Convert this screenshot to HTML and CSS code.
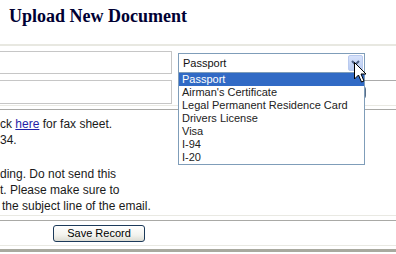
FILE: index.html
```html
<!DOCTYPE html>
<html>
<head>
<meta charset="utf-8">
<link rel="stylesheet" href="styles.css">
</head>
<body>
<h1 class="title">Upload New Document</h1>
<div class="rule-top"></div>
<div class="row row1">
  <div class="box"></div>
  <div class="cell">
    <div class="select">
      <span class="select-text">Passport</span>
      <span class="select-arrow"><svg width="15" height="16" viewBox="0 0 15 16"><path d="M4 6 L7.5 9.5 L11 6" fill="none" stroke="#4d6185" stroke-width="2"/></svg></span>
    </div>
  </div>
</div>
<div class="row row2">
  <div class="box box2"></div>
  <div class="cell cell2"><span class="browse"></span></div>
</div>
<div class="sep-light sep-a"></div>
<div class="sep-gray"></div>
<div class="text">
  <p class="para1"><span class="line l1">ck <a href="#">here</a> for fax sheet.</span><span class="line l2">34.</span></p>
  <p class="para2"><span class="line l3">ding. Do not send this</span><span class="line l4">t. Please make sure to</span><span class="line l5">the subject line of the email.</span></p>
</div>
<div class="sep-light"></div>
<div class="sep-gray sep-b"></div>
<div class="actions"><button class="save">Save Record</button></div>
<div class="sep-light"></div>
<div class="rule-bottom"></div>

<ul class="dropdown">
  <li class="selected">Passport</li>
  <li>Airman's Certificate</li>
  <li>Legal Permanent Residence Card</li>
  <li>Drivers License</li>
  <li>Visa</li>
  <li>I-94</li>
  <li>I-20</li>
</ul>
<svg class="cursor" width="14" height="23" viewBox="0 0 14 23"><path d="M1.5 1.5 L1.5 18 L5.5 14 L8.5 21 L11 20 L8 13 L13 13 Z" fill="#fff" stroke="#000" stroke-width="1" stroke-linejoin="miter"/></svg>
</body>
</html>
```
FILE: styles.css
```css
html, body {
  margin: 0;
  padding: 0;
}
body {
  width: 396px;
  height: 254px;
  overflow: hidden;
  background: #fff;
  position: relative;
  font-family: "Liberation Sans", Arial, sans-serif;
  font-size: 12px;
  color: #1a1a1a;
}
.title {
  margin: 0;
  height: 44px;
  box-sizing: border-box;
  padding: 5px 0 0 9px;
  font-family: "Liberation Serif", "Times New Roman", serif;
  font-weight: bold;
  font-size: 18px;
  line-height: 22px;
  color: #000033;
}
.rule-top {
  height: 2px;
  background: #e8e8e1;
}
.row {
  display: flex;
}
.row1 {
  margin-top: 5px;
  height: 23px;
}
.row2 {
  margin-top: 6px;
  height: 24px;
}
.box {
  margin-left: -10px;
  width: 182px;
  height: 23px;
  box-sizing: border-box;
  border: 1px solid #c6c6c6;
  background: #fff;
}
.box2 {
  height: 24px;
}
.cell {
  margin-left: 6px;
  flex: 1;
}
.select {
  margin-top: 2px;
  width: 187px;
  height: 20px;
  box-sizing: border-box;
  border: 1px solid #7f9db9;
  background: #fff;
  display: flex;
  align-items: center;
  justify-content: space-between;
  font-size: 11px;
  color: #111;
}
.select-text {
  padding-left: 4px;
}
.select-arrow {
  display: flex;
  width: 15px;
  height: 16px;
  margin-right: 1px;
  box-sizing: border-box;
  border: 1px solid #b9caef;
  border-radius: 2px;
  background: linear-gradient(#d7e2fb, #b8cbf1);
}
.select-arrow svg {
  margin: -1px;
}
.cell2 {
  border-top: 1px solid #ababab;
  margin-right: -10px;
}
.browse {
  display: block;
  margin-left: 118px;
  margin-top: 5px;
  width: 70px;
  height: 13px;
  box-sizing: border-box;
  border: 1px solid #5a6f88;
  border-radius: 3px;
  background: #f4f4f0;
}
.sep-light {
  height: 1px;
  background: #e9e9e3;
}
.sep-a {
  margin-top: 1px;
}
.sep-gray {
  margin-top: 3px;
  height: 1px;
  background: #a9a9a6;
}
.sep-b {
  margin-top: 4px;
}
.text {
  padding-top: 6px;
  line-height: 16px;
  height: 105px;
  box-sizing: border-box;
}
.text p {
  margin: 0;
}
.text .para2 {
  margin-top: 18px;
}
.line {
  display: block;
  white-space: nowrap;
}
.l5 { padding-left: 2px; }
.text a {
  color: #1f1fa8;
  text-decoration: underline;
}
.actions {
  padding-top: 4px;
  padding-left: 53px;
  height: 20px;
}
.save {
  display: block;
  width: 92px;
  height: 17px;
  box-sizing: border-box;
  margin: 0;
  padding: 0;
  border: 1px solid #1c3a5a;
  border-radius: 3px;
  background: linear-gradient(#ffffff, #f3f3ee 60%, #dcdcd3);
  font-family: "Liberation Sans", Arial, sans-serif;
  font-size: 11px;
  line-height: 15px;
  color: #000;
}
.rule-bottom {
  margin-top: 3px;
  height: 3px;
  background: #a9a99f;
}
.dropdown {
  position: absolute;
  left: 178px;
  top: 72px;
  width: 187px;
  height: 93px;
  margin: 0;
  padding: 0;
  list-style: none;
  box-sizing: border-box;
  border: 1px solid #7f9db9;
  background: #fff;
  font-size: 11px;
  color: #222;
}
.dropdown li {
  height: 13px;
  line-height: 13px;
  padding-left: 3px;
  white-space: nowrap;
}
.dropdown li.selected {
  background: #316ac5;
  color: #fff;
}
.cursor {
  position: absolute;
  left: 353px;
  top: 61px;
}
```
